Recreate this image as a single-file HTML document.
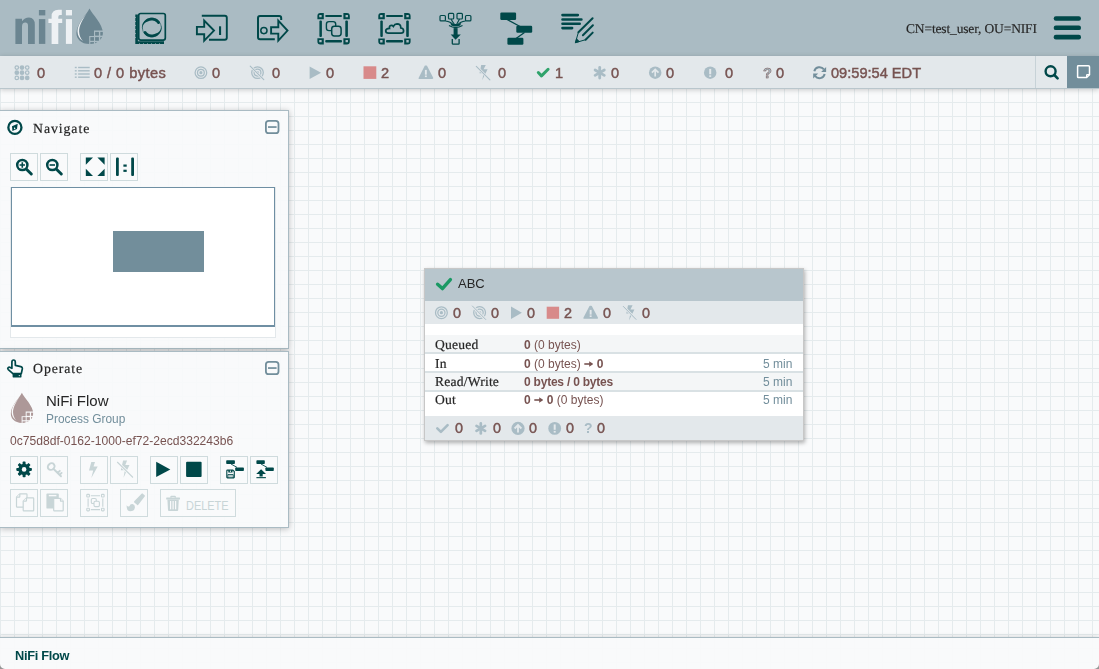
<!DOCTYPE html>
<html><head><meta charset="utf-8">
<style>
*{margin:0;padding:0;box-sizing:border-box}
html,body{width:1099px;height:669px;overflow:hidden}
body{position:relative;font-family:"Liberation Sans",sans-serif;background-color:#f9fafb;
background-image:linear-gradient(to right,#e5ebed 1px,transparent 1px),linear-gradient(to bottom,#e5ebed 1px,transparent 1px);
background-size:14px 14px;background-position:0 4px}
.abs{position:absolute}
#header{position:absolute;left:0;top:0;width:1099px;height:56px;background:#aabbc3}
#status{position:absolute;left:0;top:56px;width:1099px;height:33px;background:#e3e8eb;border-bottom:1px solid #b9c6cc;box-shadow:0 1px 5px rgba(0,0,0,0.2)}
.sv{position:absolute;top:1px;height:32px;line-height:32px;font-size:14.6px;color:#775351;white-space:nowrap;-webkit-text-stroke:0.45px #775351;will-change:transform}
.user{position:absolute;left:906px;top:21.4px;line-height:16px;font-family:"Liberation Serif",serif;font-size:13.5px;letter-spacing:-0.15px;will-change:transform;text-rendering:geometricPrecision;-webkit-text-stroke:0.15px #262626;color:#262626;white-space:nowrap}
.panel{position:absolute;left:0;width:289px;background:rgba(249,250,251,0.93);border:1px solid #aabbc3;border-left:none;box-shadow:0 1px 6px rgba(0,0,0,0.25)}
.ptitle{position:absolute;left:33px;font-family:"Liberation Serif",serif;font-size:13.8px;letter-spacing:0.93px;color:#262626;white-space:nowrap;will-change:transform;text-rendering:geometricPrecision;-webkit-text-stroke:0.2px #262626}
.btn{position:absolute;width:28px;height:28px;border:1px solid #cfdbdd;background:rgba(249,250,251,0.6)}
#pg{position:absolute;left:424px;top:268px;width:380px;height:173px;border:1px solid rgba(0,0,0,0.22);box-shadow:0.5px 1.5px 4px rgba(0,0,0,0.3);background:#fff;overflow:hidden}
.row{position:absolute;left:0;width:378px}
.lbl{position:absolute;left:434.8px;line-height:14px;font-family:"Liberation Serif",serif;font-size:13.6px;letter-spacing:0.2px;color:#262626;white-space:nowrap;will-change:transform;text-rendering:geometricPrecision;-webkit-text-stroke:0.2px #262626}
.arr{display:inline-block;vertical-align:1px}
.pv{position:absolute;font-size:14.4px;line-height:16px;color:#775351;white-space:nowrap;-webkit-text-stroke:0.45px #775351;will-change:transform}
.val{position:absolute;left:523.5px;line-height:14px;font-size:12px;color:#775351;white-space:nowrap;will-change:transform}
.info{position:absolute;left:762.5px;line-height:14px;font-size:12px;color:#728e9b;white-space:nowrap;will-change:transform}
#bc{position:absolute;left:0;top:637px;width:1099px;height:32px;background:rgba(249,250,251,0.95);border-top:1px solid #aabbc3;box-shadow:0 -1px 4px rgba(0,0,0,0.12)}
</style></head><body>

<div id="header">
<svg class="abs" style="left:0;top:0" width="1099" height="56" viewBox="0 0 1099 56">
<!-- logo -->
<g fill="#6b8591">
 <path d="M15.4,43.9 V18.8 H22 V21.2 Q24.5,17.4 29,17.4 Q34.8,17.6 34.8,24.5 V43.9 H28 V25.8 Q28,22.6 25.3,22.6 Q22,22.6 22,26.5 V43.9 Z"/>
 <rect x="38.9" y="10" width="6.4" height="5.4"/>
 <rect x="38.9" y="19.1" width="6.4" height="24.8"/>
</g>
<g fill="#eef1f4">
 <path d="M51.6,43.9 V23 H48.4 V18.8 H51.6 V16.5 Q51.6,9.8 58.5,9.8 H61.8 V15.1 H60 Q58.3,15.1 58.3,17 V18.8 H62.2 V23 H58.3 V43.9 Z"/>
 <rect x="65.9" y="10" width="6.1" height="5.4"/>
 <rect x="65.9" y="19.1" width="6.1" height="24.8"/>
</g>
<defs>
 <clipPath id="dclip"><path d="M89.5,8.4 C92,14 103,24 102.9,33 C102.8,39 98,44 89.5,44 C81,44 76.4,39 76.4,33 C76.4,24 87,14 89.5,8.4 Z"/></clipPath>
</defs>
<g fill="#6b8591">
  <g clip-path="url(#dclip)">
   <path d="M70,0 H110 V30.6 H94 V36 H89.2 V50 H70 Z"/>
   <rect x="95.1" y="31.9" width="3.8" height="3.7"/>
   <rect x="100.3" y="31.9" width="4" height="3.7"/>
   <rect x="90.3" y="37.1" width="3.7" height="3.7"/>
   <rect x="95.1" y="37.1" width="3.8" height="3.7"/>
   <rect x="100.3" y="37.1" width="4" height="3.7"/>
   <rect x="90.3" y="42.1" width="3.7" height="3.7"/>
   <rect x="95.1" y="42.1" width="3.8" height="3.7"/>
  </g>
 </g>
<path fill="#eef1f4" d="M86.6,13.8 C82,19.5 77.4,25.5 77.5,31.5 C77.6,35.8 79.5,39 82.9,41 C80.6,38.5 79.2,35.5 79.1,31.5 C79,26 82.5,19.5 86.6,13.8 Z"/>
<g fill="none" stroke="#004849">
 <!-- processor -->
 <rect x="138.7" y="13.5" width="26.6" height="26.6" rx="2" stroke-width="1.7"/>
 <path d="M136.6,14.6 V42.6 H164" stroke-width="2.6"/>
 <circle cx="151.8" cy="27.5" r="9.5" stroke-width="0.5"/>
 <!-- input port -->
 <path d="M201.8,15.7 H224.8 Q226.8,15.7 226.8,17.7 V37.8 Q226.8,39.8 224.8,39.8 H209" stroke-width="1.9"/>
 <path d="M196.9,26.9 H204.2 V20.6 L214,30.6 L204.2,40.6 V34.2 H196.9 Z" stroke-width="1.9" stroke-linejoin="miter"/>
 <!-- output port -->
 <path d="M281.2,19.9 V18.2 Q281.2,16.1 279.2,16.1 H260 Q258,16.1 258,18.1 V37.3 Q258,39.3 260,39.3 H274.8" stroke-width="2"/>
 <circle cx="263.9" cy="30.6" r="3.1" stroke-width="1.5"/>
 <path d="M271.1,27.3 H278.3 V20.6 L287.5,30.6 L278.3,40.6 V33.6 H271.1 Z" stroke-width="1.9"/>
 <!-- process group inner -->
 <rect x="326.4" y="21.6" width="9.3" height="9" rx="2.6" stroke-width="1.4"/>
 <rect x="331.7" y="26.3" width="9.4" height="9.6" rx="2.6" stroke-width="1.5" fill="#aabbc3"/>
 <!-- rpg cloud -->
 <path d="M388.5,33.2 H401 Q403.6,33.2 403.6,30.8 Q403.6,28.3 400.8,28 Q400.9,24 397,23.9 Q394.6,23.9 393.4,26.4 Q392.3,24.9 390.6,25.5 Q389,26.1 389.5,28.4 Q385.7,28.6 385.7,30.8 Q385.7,33.2 388.5,33.2 Z" stroke-width="1.7"/>
 <!-- funnel -->
 <rect x="440" y="15.5" width="5.4" height="5.4" rx="1" stroke-width="1.2"/>
 <rect x="448.5" y="13.3" width="5.2" height="5.7" rx="1" stroke-width="1.2"/>
 <rect x="457" y="13.3" width="5.4" height="5.7" rx="1" stroke-width="1.2"/>
 <rect x="465.5" y="15.5" width="5.4" height="5.4" rx="1" stroke-width="1.2"/>
 <path d="M445.4,21 Q451,22 452.5,24 M451,19 Q452.5,22 454.2,24 M459.5,19 Q458,22 456.8,24 M465.5,21 Q460,22 458.5,24" stroke-width="1.15"/>
 <path d="M449,25.6 Q455.5,29.5 462.5,25.6" stroke-width="1.2"/>
 <path d="M452.3,38.9 V43.4 Q452.3,44.2 453.1,44.2 H458.4 Q459.1,44.2 459.1,43.4 V38.9" stroke-width="1.3"/>
 <!-- label -->
 <path d="M562.5,15.1 H577.8 M562.5,19.5 H581.4 M562.5,23.7 H579.7 M562.5,28.1 H572.1" stroke-width="2.6" stroke-linecap="round"/>
 <path d="M578.4,32.3 L592.6,18.3 M582.9,35.2 L592.9,25.2 M585.6,39.7 L592.7,32.6" stroke-width="2" stroke-linecap="round"/>
 <path d="M578.4,32.3 L575.4,42.7 L585.6,39.7" stroke-width="1"/>
</g>
<g fill="#004849">
 <!-- pg frame -->
 <path d="M317.4,16 Q317.4,13.1 320.3,13.1 H323.8 V19.2 H317.4 Z M319.25,14.95 V17.35 H321.65 V14.95 Z" fill-rule="evenodd"/>
 <path d="M349.8,16 Q349.8,13.1 346.9,13.1 H343.4 V19.2 H349.8 Z M345.55,14.95 V17.35 H347.95 V14.95 Z" fill-rule="evenodd"/>
 <path d="M317.4,41.5 Q317.4,44.4 320.3,44.4 H323.8 V38.3 H317.4 Z M319.25,39.95 V42.35 H321.65 V39.95 Z" fill-rule="evenodd"/>
 <path d="M349.8,41.5 Q349.8,44.4 346.9,44.4 H343.4 V38.3 H349.8 Z M345.55,39.95 V42.35 H347.95 V39.95 Z" fill-rule="evenodd"/>
 <rect x="325.2" y="15" width="16.8" height="2.1" rx="1"/>
 <rect x="325.2" y="40.1" width="16.8" height="2.3" rx="1"/>
 <rect x="319.4" y="20.4" width="2.5" height="16.5" rx="1"/>
 <rect x="345.3" y="20.4" width="2.6" height="16.5" rx="1"/>
 <!-- rpg frame -->
 <path d="M378.3,16 Q378.3,13.1 381.2,13.1 H384.8 V19.2 H378.3 Z M380.15,14.95 V17.35 H382.55 V14.95 Z" fill-rule="evenodd"/>
 <path d="M410.6,16 Q410.6,13.1 407.7,13.1 H404.2 V19.2 H410.6 Z M406.35,14.95 V17.35 H408.75 V14.95 Z" fill-rule="evenodd"/>
 <path d="M378.3,41.6 Q378.3,44.5 381.2,44.5 H384.8 V38.4 H378.3 Z M380.15,40.05 V42.45 H382.55 V40.05 Z" fill-rule="evenodd"/>
 <path d="M410.6,41.6 Q410.6,44.5 407.7,44.5 H404.2 V38.4 H410.6 Z M406.35,40.05 V42.45 H408.75 V40.05 Z" fill-rule="evenodd"/>
 <rect x="386" y="15" width="17" height="2.1" rx="1"/>
 <rect x="386" y="40.1" width="17" height="2.3" rx="1"/>
 <rect x="380.3" y="20.4" width="2.5" height="16.6" rx="1"/>
 <rect x="406.2" y="20.4" width="2.6" height="16.6" rx="1"/>
 <!-- funnel -->
 <path d="M450.3,23 Q455.5,25.2 461.2,23 L460.2,25.6 Q455.5,27.6 451.3,25.6 Z"/>
 <rect x="453.6" y="28.1" width="4" height="7"/>
 <path d="M450.7,34.4 H460.8 L455.6,39.8 Z"/>
 <!-- input bar -->
 <rect x="219" y="26.3" width="2.1" height="8.7"/>
 <!-- template -->
 <rect x="500.3" y="12.6" width="15.8" height="7.3" rx="1.2"/>
 <rect x="516.3" y="25.7" width="15.9" height="7.1" rx="1.2"/>
 <rect x="507.4" y="37.7" width="16" height="7.1" rx="1.2"/>
 <!-- label tip -->
 <path d="M574.8,43.3 L576.3,38 L580.1,41.8 Z"/>
 <!-- hamburger -->
 <rect x="1053.7" y="16.3" width="27.3" height="4.5" rx="2.2"/>
 <rect x="1053.7" y="25.6" width="27.3" height="4.5" rx="2.2"/>
 <rect x="1053.7" y="34.8" width="27.3" height="4.6" rx="2.2"/>
</g>
<path d="M142.15,29.20 L142.04,28.33 L142.00,27.45 L142.04,26.58 L142.17,25.71 L142.36,24.85 L142.64,24.02 L142.99,23.21 L143.41,22.44 L143.89,21.71 L144.44,21.03 L145.05,20.40 L145.71,19.82 L146.42,19.31 L147.18,18.86 L147.97,18.48 L148.79,18.17 L149.64,17.94 L150.50,17.79 L151.38,17.71 L152.26,17.71 L153.13,17.79 L153.99,17.95 L154.84,18.18 L155.66,18.49 L156.45,18.87 L157.20,19.32 L157.91,19.84 L158.57,20.42 L159.18,21.05 L159.73,21.74 A1.40,1.40 0 0 1 157.46,23.39 L157.46,23.39 L157.07,22.90 L156.64,22.44 L156.17,22.03 L155.66,21.66 L155.12,21.34 L154.56,21.07 L153.97,20.85 L153.37,20.68 L152.75,20.56 L152.13,20.51 L151.50,20.51 L150.87,20.56 L150.26,20.67 L149.65,20.83 L149.04,21.00 L148.43,21.19 L147.80,21.40 L147.17,21.66 L146.53,21.96 L145.90,22.31 L145.28,22.73 L144.68,23.21 L144.13,23.77 L143.62,24.39 L143.18,25.08 L142.82,25.83 L142.56,26.63 L142.40,27.46 L142.36,28.30 L142.44,29.15 Z" fill="#004849"/><path d="M161.45,25.80 L161.56,26.67 L161.60,27.55 L161.56,28.42 L161.43,29.29 L161.24,30.15 L160.96,30.98 L160.61,31.79 L160.19,32.56 L159.71,33.29 L159.16,33.97 L158.55,34.60 L157.89,35.18 L157.18,35.69 L156.42,36.14 L155.63,36.52 L154.81,36.83 L153.96,37.06 L153.10,37.21 L152.22,37.29 L151.34,37.29 L150.47,37.21 L149.61,37.05 L148.76,36.82 L147.94,36.51 L147.15,36.13 L146.40,35.68 L145.69,35.16 L145.03,34.58 L144.42,33.95 L143.87,33.26 A1.40,1.40 0 0 1 146.14,31.61 L146.14,31.61 L146.53,32.10 L146.96,32.56 L147.43,32.97 L147.94,33.34 L148.48,33.66 L149.04,33.93 L149.63,34.15 L150.23,34.32 L150.85,34.44 L151.47,34.49 L152.10,34.49 L152.73,34.44 L153.34,34.33 L153.95,34.17 L154.56,34.00 L155.17,33.81 L155.80,33.60 L156.43,33.34 L157.07,33.04 L157.70,32.69 L158.32,32.27 L158.92,31.79 L159.47,31.23 L159.98,30.61 L160.42,29.92 L160.78,29.17 L161.04,28.37 L161.20,27.54 L161.24,26.70 L161.16,25.85 Z" fill="#004849"/>
<g fill="#aabbc3"><rect x="135" y="17" width="0.9" height="0.8"/><rect x="135" y="21" width="0.9" height="0.8"/><rect x="135" y="25" width="0.9" height="0.8"/><rect x="135" y="29" width="0.9" height="0.8"/><rect x="135" y="33" width="0.9" height="0.8"/><rect x="135" y="37" width="0.9" height="0.8"/><rect x="139" y="43.3" width="0.8" height="0.9"/><rect x="143" y="43.3" width="0.8" height="0.9"/><rect x="147" y="43.3" width="0.8" height="0.9"/><rect x="151" y="43.3" width="0.8" height="0.9"/><rect x="155" y="43.3" width="0.8" height="0.9"/><rect x="159" y="43.3" width="0.8" height="0.9"/></g>
<path d="M507,19.5 L521,27 M524.5,32.5 L516,38.5" stroke="#004849" stroke-width="1.3" fill="none"/>
</svg>
<div class="user">CN=test_user, OU=NIFI</div>
</div>

<div id="status">
<svg class="abs" style="left:0;top:-56px" width="1099" height="88" viewBox="0 0 1099 88">
<g fill="#a9bcc5" stroke="none">
 <circle cx="22" cy="67.6" r="2.35"/><circle cx="16.8" cy="72.7" r="2.35"/><circle cx="22" cy="72.7" r="2.35"/><circle cx="22" cy="77.9" r="2.35"/><circle cx="27.2" cy="77.9" r="2.35"/>
</g>
<g fill="none" stroke="#a9bcc5" stroke-width="1.25">
 <circle cx="16.8" cy="67.6" r="1.75"/><circle cx="27.2" cy="67.6" r="1.75"/><circle cx="27.2" cy="72.7" r="1.75"/><circle cx="16.8" cy="77.9" r="1.75"/>
</g>
<g fill="#a9bcc5">
 <rect x="74.8" y="66.8" width="1.9" height="1.4"/><rect x="74.8" y="70.1" width="1.9" height="1.4"/><rect x="74.8" y="73.3" width="1.9" height="1.4"/><rect x="74.8" y="76.5" width="1.9" height="1.4"/>
 <rect x="78.1" y="66.8" width="11.6" height="1.4"/><rect x="78.1" y="70.1" width="11.6" height="1.4"/><rect x="78.1" y="73.3" width="11.6" height="1.4"/><rect x="78.1" y="76.5" width="11.6" height="1.4"/>
</g>
<g fill="none" stroke="#a9bcc5" stroke-width="1.25">
 <circle cx="200.9" cy="72.7" r="5.8"/><circle cx="200.9" cy="72.7" r="3.4"/>
 <circle cx="257.5" cy="72.6" r="5.8"/><circle cx="257.5" cy="72.6" r="3.4"/>
</g>
<circle cx="200.9" cy="72.7" r="1.6" fill="#a9bcc5"/>
<circle cx="257.5" cy="72.6" r="1.6" fill="#a9bcc5"/>
<path d="M250.2,66.1 L263.8,79.6" stroke="#e3e8eb" stroke-width="2.6"/><path d="M250.2,66.1 L263.8,79.6" stroke="#a9bcc5" stroke-width="1.1" stroke-linecap="round"/>
<path d="M309.6,66.6 L321.1,72.7 L309.6,78.9 Z" fill="#a9bcc5"/>
<rect x="363.5" y="66.3" width="12.8" height="12.6" fill="#d88a8a"/>
<path d="M425.8,65.5 Q426.5,65.2 427,65.8 L433.2,77.8 Q433.5,78.9 432.4,78.9 H419.2 Q418.2,78.9 418.6,77.9 L424.7,65.8 Q425.1,65.2 425.8,65.5 Z" fill="#a9bcc5"/>
<rect x="424.9" y="69.9" width="1.9" height="4.8" fill="#e3e8eb"/><rect x="424.9" y="75.5" width="1.9" height="1.6" fill="#e3e8eb"/>
<path d="M481.2,65 H485.8 L483.6,69.3 H487.6 L482.2,80.2 L483.6,73.2 H479.5 Z" fill="#a9bcc5"/>
<path d="M476.3,66.3 L489.9,79.8" stroke="#e3e8eb" stroke-width="2.6"/><path d="M476.3,66.3 L489.9,79.8" stroke="#a9bcc5" stroke-width="1.1" stroke-linecap="round"/>
<path d="M538.3,72.5 L541.5,75.9 L548.1,69.3" fill="none" stroke="#2fa36b" stroke-width="3" stroke-linecap="round" stroke-linejoin="round"/>
<g stroke="#a9bcc5" stroke-width="2.8" stroke-linecap="round">
 <path d="M599.7,67.4 V78"/><path d="M595.1,70 L604.3,75.4"/><path d="M595.1,75.4 L604.3,70"/>
</g>
<circle cx="655.2" cy="72.7" r="6.25" fill="#a9bcc5"/>
<path d="M655.2,76.6 V69.6 M651.9,72.7 L655.2,69.4 L658.5,72.7" fill="none" stroke="#e3e8eb" stroke-width="1.7"/>
<circle cx="710.2" cy="72.7" r="6.25" fill="#a9bcc5"/>
<rect x="709.2" y="68.9" width="2" height="5.4" fill="#e3e8eb"/><rect x="709.2" y="75.3" width="2" height="1.6" fill="#e3e8eb"/>
<g fill="none" stroke="#728e9b" stroke-width="2">
 <path d="M814.3,71.3 A5.4,5.4 0 0 1 823.9,69.4"/>
 <path d="M824.7,74.1 A5.4,5.4 0 0 1 815.1,76"/>
</g>
<path d="M826.1,66.9 V71.9 H821.1 Z" fill="#728e9b"/>
<path d="M813.2,78.6 V73.6 H818.2 Z" fill="#728e9b"/>
<circle cx="1050.6" cy="71.3" r="5" fill="none" stroke="#004849" stroke-width="2.4"/>
<path d="M1054.3,75 L1057.6,78.3" stroke="#004849" stroke-width="2.6" stroke-linecap="round"/>
</svg>
<div class="sv" style="left:37.3px">0</div>
<div class="sv" style="left:94.3px;letter-spacing:0.45px">0 / 0 bytes</div>
<div class="sv" style="left:212.1px">0</div>
<div class="sv" style="left:272.3px">0</div>
<div class="sv" style="left:325.9px">0</div>
<div class="sv" style="left:380.8px">2</div>
<div class="sv" style="left:438.2px">0</div>
<div class="sv" style="left:498.4px">0</div>
<div class="sv" style="left:555.4px">1</div>
<div class="sv" style="left:611.1px">0</div>
<div class="sv" style="left:666px">0</div>
<div class="sv" style="left:725px">0</div>
<div class="sv" style="left:763px;color:#a9bcc5;font-weight:bold">?</div>
<div class="sv" style="left:775.8px">0</div>
<div class="sv" style="left:830.7px">09:59:54 EDT</div>
<div class="abs" style="left:1035px;top:0;width:1px;height:32px;background:#c7d2d7"></div>
<div class="abs" style="left:1067px;top:0;width:32px;height:32px;background:#728e9b"></div>
<svg class="abs" style="left:1067px;top:0" width="32" height="32" viewBox="1067 56 32 32">
 <path d="M1078.3,65.7 H1088.4 Q1089.5,65.7 1089.5,66.8 V74.6 L1086.6,77.6 H1078.3 Q1077.6,77.6 1077.6,76.9 V66.4 Q1077.6,65.7 1078.3,65.7 Z" fill="none" stroke="#fff" stroke-width="1.5"/>
 <path d="M1089.5,74.6 H1087.3 Q1086.6,74.6 1086.6,75.3 V77.6" fill="none" stroke="#fff" stroke-width="1.2"/>
</svg>
</div>

<div class="panel" style="top:110px;height:239px"></div>
<div class="ptitle" style="top:120.6px">Navigate</div>
<div class="btn" style="left:10px;top:153px"></div>
<div class="btn" style="left:40px;top:153px"></div>
<div class="btn" style="left:80px;top:153px"></div>
<div class="btn" style="left:110px;top:153px"></div>
<div class="abs" style="left:10px;top:187px;width:266px;height:151px;background:#fff;border:1px solid #e3e8eb"></div>
<div class="abs" style="left:11px;top:187px;width:264px;height:140px;border:1px solid #6f8fa3;border-bottom-width:2px;border-left-width:1.5px"></div>
<div class="abs" style="left:113px;top:231px;width:91px;height:41px;background:#728e9b"></div>
<div class="panel" style="top:351px;height:177px"></div>
<div class="ptitle" style="top:361.4px">Operate</div>
<svg class="abs" style="left:0;top:385px" width="40" height="45" viewBox="0 385 40 45">
 <g transform="translate(-54.2,385.56) scale(0.85)">
  <g fill="#ad9898">
  <g clip-path="url(#dclip)">
   <path d="M70,0 H110 V30.6 H94 V36 H89.2 V50 H70 Z"/>
   <rect x="95.1" y="31.9" width="3.8" height="3.7"/>
   <rect x="100.3" y="31.9" width="4" height="3.7"/>
   <rect x="90.3" y="37.1" width="3.7" height="3.7"/>
   <rect x="95.1" y="37.1" width="3.8" height="3.7"/>
   <rect x="100.3" y="37.1" width="4" height="3.7"/>
   <rect x="90.3" y="42.1" width="3.7" height="3.7"/>
   <rect x="95.1" y="42.1" width="3.8" height="3.7"/>
  </g>
 </g>
  <path fill="#f9fafb" d="M86.6,13.8 C82,19.5 77.4,25.5 77.5,31.5 C77.6,35.8 79.5,39 82.9,41 C80.6,38.5 79.2,35.5 79.1,31.5 C79,26 82.5,19.5 86.6,13.8 Z"/>
 </g>
</svg>
<div class="abs" style="left:46.3px;top:392.3px;font-size:15px;line-height:18px;color:#262626;white-space:nowrap;will-change:transform">NiFi Flow</div>
<div class="abs" style="left:46.3px;top:412px;font-size:11.9px;line-height:14px;color:#728e9b;white-space:nowrap;will-change:transform">Process Group</div>
<div class="abs" style="left:10.3px;top:433.5px;font-size:12.1px;line-height:14px;color:#775351;white-space:nowrap;will-change:transform">0c75d8df-0162-1000-ef72-2ecd332243b6</div>
<div class="btn" style="left:10px;top:456px"></div>
<div class="btn" style="left:40px;top:456px"></div>
<div class="btn" style="left:80px;top:456px"></div>
<div class="btn" style="left:110px;top:456px"></div>
<div class="btn" style="left:150px;top:456px"></div>
<div class="btn" style="left:180px;top:456px"></div>
<div class="btn" style="left:220px;top:456px"></div>
<div class="btn" style="left:250px;top:456px"></div>
<div class="btn" style="left:10px;top:489px"></div>
<div class="btn" style="left:40px;top:489px"></div>
<div class="btn" style="left:80px;top:489px"></div>
<div class="btn" style="left:120px;top:489px"></div>
<div class="btn" style="left:160px;top:489px;width:76px"></div>
<div class="abs" style="left:186px;top:499px;font-size:12.7px;line-height:14px;color:#c8d5d7;white-space:nowrap;transform:scaleX(0.86);transform-origin:0 0">DELETE</div>
<svg class="abs" style="left:0;top:0" width="300" height="530" viewBox="0 0 300 530">
 <circle cx="14.9" cy="127.4" r="6.55" fill="none" stroke="#004849" stroke-width="2.3"/>
 <path d="M17.7,123.7 L17,129 L12.4,131.1 L12,126.3 Z" fill="#004849"/>
 <path d="M14,127.2 L15.6,128.3 L14,129.4 Z" fill="#fff"/>
 <rect x="265.9" y="120.8" width="12.6" height="12.4" rx="2.8" fill="none" stroke="#728e9b" stroke-width="1.8"/>
 <rect x="268" y="126.2" width="8.6" height="1.7" fill="#728e9b"/>
 <rect x="265.9" y="361.8" width="12.6" height="12.4" rx="2.8" fill="none" stroke="#728e9b" stroke-width="1.8"/>
 <rect x="268" y="367.2" width="8.6" height="1.7" fill="#728e9b"/>
 <!-- zoom in/out -->
 <g fill="none" stroke="#004849">
  <circle cx="22.3" cy="165" r="5.1" stroke-width="2.5"/>
  <path d="M26.2,169 L31.3,174" stroke-width="3" stroke-linecap="round"/>
  <path d="M19.6,165 H25 M22.3,162.3 V167.7" stroke-width="1.6"/>
  <circle cx="52.3" cy="165" r="5.1" stroke-width="2.5"/>
  <path d="M56.2,169 L61.3,174" stroke-width="3" stroke-linecap="round"/>
  <path d="M49.6,165 H55" stroke-width="1.6"/>
 </g>
 <g fill="#004849">
  <path d="M85.8,157.6 H93 L85.8,164.8 Z"/><path d="M104.6,157.6 H97.4 L104.6,164.8 Z"/>
  <path d="M85.8,175.9 H93 L85.8,168.7 Z"/><path d="M104.6,175.9 H97.4 L104.6,168.7 Z"/>
  <rect x="116" y="157.6" width="2.8" height="18.3" rx="1"/>
  <rect x="131.2" y="157.6" width="2.8" height="18.3" rx="1"/>
  <rect x="123.4" y="164.5" width="3.3" height="2.2"/>
  <rect x="123.4" y="169.7" width="3.3" height="2.2"/>
 </g>
 <!-- hand -->
 <path d="M11.9,368.3 V362.2 Q11.9,360 13.6,360 Q15.3,360 15.3,362.2 V365.3 L20.8,366.6 Q22.6,367.1 22.3,369 L21.3,373.6 H12.9 L8.3,369.6 Q7.3,368.6 8.2,367.6 Q9.1,366.8 10.3,367.4 Z" fill="none" stroke="#004849" stroke-width="1.7" stroke-linejoin="round"/>
 <rect x="12.6" y="373.8" width="8.9" height="3.6" rx="0.6" fill="#004849"/>
 <circle cx="19.3" cy="375.6" r="0.6" fill="#fff"/>
 <!-- gear -->
 <g transform="translate(24.1,469.4)" fill="#004849">
  <circle r="5.7"/><rect x="-1.5" y="-7.8" width="3" height="4" rx="0.8" transform="rotate(0)"/><rect x="-1.5" y="-7.8" width="3" height="4" rx="0.8" transform="rotate(45)"/><rect x="-1.5" y="-7.8" width="3" height="4" rx="0.8" transform="rotate(90)"/><rect x="-1.5" y="-7.8" width="3" height="4" rx="0.8" transform="rotate(135)"/><rect x="-1.5" y="-7.8" width="3" height="4" rx="0.8" transform="rotate(180)"/><rect x="-1.5" y="-7.8" width="3" height="4" rx="0.8" transform="rotate(225)"/><rect x="-1.5" y="-7.8" width="3" height="4" rx="0.8" transform="rotate(270)"/><rect x="-1.5" y="-7.8" width="3" height="4" rx="0.8" transform="rotate(315)"/>
  <circle r="2.3" fill="#f9fafb"/>
 </g>
 <!-- key -->
 <g fill="none" stroke="#c8d5d7" stroke-width="1.9" stroke-linecap="round">
  <ellipse cx="51.2" cy="466.6" rx="3.6" ry="3.1" transform="rotate(-40 51.2 466.6)"/>
  <path d="M53.9,469.3 L61,476.3 M57.6,473 L59.8,470.8 M59.6,474.9 L61.6,472.9"/>
 </g>
 <path d="M91.3,462 H95 L93.5,466.5 H97.7 L91.3,478.1 L93.2,470.5 H89 Z" fill="#c8d5d7"/>
 <path d="M123.1,460.4 H127.1 L125.3,464.9 H129.5 L123.5,477.8 L124.8,470.2 H120.8 Z" fill="#c8d5d7"/>
 <path d="M117.2,462 L133,477.5" stroke="#f9fafb" stroke-width="2.6"/>
 <path d="M117.2,462 L133,477.5" stroke="#c8d5d7" stroke-width="1.1"/>
 <path d="M156.2,461.7 L170.3,469.4 L156.2,477 Z" fill="#004849"/>
 <rect x="186.1" y="461.7" width="15.5" height="15.3" rx="1" fill="#004849"/>
 <!-- template create -->
 <rect x="226.2" y="460.3" width="8.7" height="3.7" rx="0.8" fill="#004849"/>
 <rect x="235.2" y="467.4" width="8.7" height="3.6" rx="0.8" fill="#004849"/>
 <path d="M231,464 L237,467.4" stroke="#004849" stroke-width="0.9"/>
 <path d="M226.8,470.7 Q226.8,470.1 227.4,470.1 H232.8 L234.3,471.6 V477.3 Q234.3,477.9 233.7,477.9 H227.4 Q226.8,477.9 226.8,477.3 Z" fill="none" stroke="#004849" stroke-width="1.1"/>
 <rect x="228.3" y="470.1" width="4.2" height="2.4" fill="#004849"/>
 <rect x="229.9" y="470.6" width="1" height="1.3" fill="#f9fafb"/>
 <path d="M227.9,477.9 V474.6 H233.2 V477.9" fill="none" stroke="#004849" stroke-width="0.9"/>
 <path d="M228.8,476 H232.3" stroke="#004849" stroke-width="0.5"/>
 <rect x="256.4" y="460.3" width="8.4" height="3.7" rx="0.8" fill="#004849"/>
 <rect x="265.4" y="467.4" width="8.4" height="3.6" rx="0.8" fill="#004849"/>
 <path d="M261,464 L267,467.4" stroke="#004849" stroke-width="0.9"/>
 <path d="M256.2,474 L261.1,469.2 L266,474 H262.7 V476.6 H259.5 V474 Z" fill="#004849"/>
 <rect x="256.4" y="477.1" width="9.5" height="1.1" fill="#004849"/>
 <!-- copy -->
 <g fill="#f9fafb" stroke="#c8d5d7" stroke-width="1.2" stroke-linejoin="round">
  <path d="M19.8,493.9 H26.4 Q27,493.9 27,494.5 V506.6 Q27,507.2 26.4,507.2 H17.1 Q16.5,507.2 16.5,506.6 V497.2 Z"/>
  <path d="M16.5,497.2 H19.2 Q19.8,497.2 19.8,496.6 V493.9"/>
  <path d="M26.5,497.9 H33.1 Q33.7,497.9 33.7,498.5 V510.2 Q33.7,510.8 33.1,510.8 H23.8 Q23.2,510.8 23.2,510.2 V501.2 Z"/>
  <path d="M23.2,501.2 H25.9 Q26.5,501.2 26.5,500.6 V497.9"/>
 </g>
 <!-- paste -->
 <rect x="46.4" y="493.6" width="12.4" height="15" rx="0.9" fill="#c8d5d7"/>
 <rect x="48.8" y="494.9" width="7.6" height="1.4" fill="#f9fafb"/>
 <g fill="#f9fafb" stroke="#c8d5d7" stroke-width="1.2" stroke-linejoin="round">
  <path d="M53.7,498.4 H60.5 L63.2,501.1 V510.2 Q63.2,510.8 62.6,510.8 H54.3 Q53.7,510.8 53.7,510.2 Z"/>
  <path d="M60.5,498.4 V501.1 H63.2"/>
 </g>
 <!-- group -->
 <g fill="none" stroke="#c8d5d7" stroke-width="1.1">
  <rect x="86.8" y="494.4" width="2.6" height="2.6" rx="0.6"/><rect x="101.5" y="494.4" width="2.6" height="2.6" rx="0.6"/>
  <rect x="86.8" y="508.3" width="2.6" height="2.6" rx="0.6"/><rect x="101.5" y="508.3" width="2.6" height="2.6" rx="0.6"/>
  <path d="M90.8,495.7 H100 M90.8,509.6 H100 M88.1,498.5 V506.8 M102.8,498.5 V506.8"/>
  <rect x="91.3" y="498.5" width="5" height="5" rx="1.3"/>
  <rect x="94" y="501.2" width="5.4" height="5.4" rx="1.3" fill="#f9fafb"/>
 </g>
 <!-- brush -->
 <path d="M142.2,494.3 L144,496 L137.6,504.2 L134.9,501.8 Z" fill="#c8d5d7" stroke="#c8d5d7" stroke-width="1.8" stroke-linejoin="round"/>
 <path d="M126.6,505.2 Q127.8,507.2 129.4,506.2 Q130.2,503.8 132.5,504.1 Q135.2,504.8 134.9,507.6 Q134.4,511.3 130.2,511.3 Q126.5,511.3 126.6,505.2 Z" fill="#c8d5d7"/>
 <!-- trash -->
 <g fill="#c8d5d7">
  <rect x="166.2" y="497.6" width="13.8" height="1.8" rx="0.5"/>
  <path d="M170.3,497.8 V496.7 Q170.3,495.7 171.3,495.7 H174.9 Q175.9,495.7 175.9,496.7 V497.8 H174.6 V497 H171.6 V497.8 Z"/>
  <path d="M167.4,499.4 H178.8 L178.2,510 Q178.2,511 177.2,511 H169 Q168,511 168,510 Z"/>
 </g>
 <g fill="#f9fafb"><rect x="170" y="501" width="1.2" height="8.3"/><rect x="172.5" y="501" width="1.2" height="8.3"/><rect x="175" y="501" width="1.2" height="8.3"/></g>
</svg>

<div id="pg">
  <div class="row" style="top:0;height:32px;background:#b8c6cd"></div>
  <div class="row" style="top:32px;height:23px;background:#e3e8eb"></div>
  <div class="row" style="top:66px;height:17px;background:#f4f6f7"></div>
  <div class="row" style="top:83px;height:2px;background:#d9e1e4"></div>
  <div class="row" style="top:102px;height:2px;background:#d9e1e4"></div>
  <div class="row" style="top:104px;height:17px;background:#f4f6f7"></div>
  <div class="row" style="top:121px;height:2px;background:#d9e1e4"></div>
  <div class="row" style="top:147px;height:24px;background:#e3e8eb"></div>
</div>
<div class="abs" style="left:458px;top:275.9px;font-size:13px;line-height:16px;color:#262626;will-change:transform">ABC</div>
<div class="pv" style="left:452.5px;top:304.5px">0</div>
<div class="pv" style="left:491.4px;top:304.5px">0</div>
<div class="pv" style="left:527.3px;top:304.5px">0</div>
<div class="pv" style="left:563.9px;top:304.5px">2</div>
<div class="pv" style="left:602.8px;top:304.5px">0</div>
<div class="pv" style="left:641.7px;top:304.5px">0</div>
<div class="lbl" style="top:337.6px">Queued</div>
<div class="lbl" style="top:356.6px">In</div>
<div class="lbl" style="top:374.6px">Read/Write</div>
<div class="lbl" style="top:392.6px">Out</div>
<div class="val" style="top:338px"><b>0</b> (0 bytes)</div>
<div class="val" style="top:357px"><b>0</b> (0 bytes) <svg class="arr" width="9.4" height="6" viewBox="0 0 9.4 6"><path d="M0.3,3 H6" stroke="#775351" stroke-width="1.6"/><path d="M5.2,0.3 L9.4,3 L5.2,5.7 Z" fill="#775351"/></svg> <b>0</b></div>
<div class="val" style="top:375px;letter-spacing:-0.22px"><b>0 bytes / 0 bytes</b></div>
<div class="val" style="top:393px"><b>0</b> <svg class="arr" width="9.4" height="6" viewBox="0 0 9.4 6"><path d="M0.3,3 H6" stroke="#775351" stroke-width="1.6"/><path d="M5.2,0.3 L9.4,3 L5.2,5.7 Z" fill="#775351"/></svg> <b>0</b> (0 bytes)</div>
<div class="info" style="top:357px">5 min</div>
<div class="info" style="top:375px">5 min</div>
<div class="info" style="top:393px">5 min</div>
<div class="pv" style="left:454.8px;top:420px">0</div>
<div class="pv" style="left:492.5px;top:420px">0</div>
<div class="pv" style="left:529.4px;top:420px">0</div>
<div class="pv" style="left:566.3px;top:420px">0</div>
<div class="pv" style="left:596.7px;top:420px">0</div>
<div class="abs" style="left:584px;top:420px;font-size:14px;line-height:16px;font-weight:bold;color:#a9bcc5;will-change:transform">?</div>
<svg class="abs" style="left:400px;top:260px" width="420" height="200" viewBox="400 260 420 200">
 <path d="M437.6,284.2 L442.4,288.6 L450.4,279.6" fill="none" stroke="#1a9964" stroke-width="3.4" stroke-linecap="round" stroke-linejoin="round"/>
 <g fill="none" stroke="#a9bcc5" stroke-width="1.25">
  <circle cx="441.4" cy="312.7" r="5.9"/><circle cx="441.4" cy="312.7" r="3.6"/>
  <circle cx="479.6" cy="312.6" r="5.9"/><circle cx="479.6" cy="312.6" r="3.6"/>
 </g>
 <circle cx="441.4" cy="312.7" r="1.6" fill="#a9bcc5"/><circle cx="479.6" cy="312.6" r="1.6" fill="#a9bcc5"/>
 <path d="M472.4,306 L485.7,319.5" stroke="#e3e8eb" stroke-width="2.6"/><path d="M472.4,306 L485.7,319.5" stroke="#a9bcc5" stroke-width="1.0" stroke-linecap="round"/>
 <path d="M511,306.4 L521.9,312.7 L511,319.1 Z" fill="#a9bcc5"/>
 <rect x="546.7" y="306.7" width="12.4" height="12.1" fill="#d88a8a"/>
 <path d="M590.6,305.8 Q591.3,305.5 591.8,306.1 L598,317.7 Q598.3,318.8 597.2,318.8 H584 Q583,318.8 583.4,317.8 L589.5,306.1 Q589.9,305.5 590.6,305.8 Z" fill="#a9bcc5"/>
 <rect x="589.7" y="309.9" width="1.9" height="4.7" fill="#e3e8eb"/><rect x="589.7" y="315.4" width="1.9" height="1.6" fill="#e3e8eb"/>
 <path d="M628,305.3 H632.6 L630.4,309.6 H634.4 L629,320.5 L630.4,313.5 H626.3 Z" fill="#a9bcc5"/>
 <path d="M623.3,306.4 L636,319.4" stroke="#e3e8eb" stroke-width="2.6"/><path d="M623.3,306.4 L636,319.4" stroke="#a9bcc5" stroke-width="1.0" stroke-linecap="round"/>
 <path d="M437.3,428.4 L440.9,431.9 L447.6,425.2" fill="none" stroke="#a9bcc5" stroke-width="2.6" stroke-linecap="round" stroke-linejoin="round"/>
 <g stroke="#a9bcc5" stroke-width="2.7" stroke-linecap="round">
  <path d="M480.8,423.4 V433.4"/><path d="M476.5,425.9 L485.1,430.9"/><path d="M476.5,430.9 L485.1,425.9"/>
 </g>
 <circle cx="518" cy="428.4" r="6.6" fill="#a9bcc5"/>
 <path d="M518,432.4 V425.2 M514.6,428.5 L518,425.1 L521.4,428.5" fill="none" stroke="#e3e8eb" stroke-width="1.8"/>
 <circle cx="554.7" cy="428.4" r="6.4" fill="#a9bcc5"/>
 <rect x="553.7" y="424.4" width="2" height="5.4" fill="#e3e8eb"/><rect x="553.7" y="430.9" width="2" height="1.7" fill="#e3e8eb"/>
</svg>

<div id="bc"></div>
<div class="abs" style="left:15.2px;top:648px;font-size:12.8px;letter-spacing:-0.3px;line-height:16px;font-weight:bold;color:#004849;white-space:nowrap;will-change:transform">NiFi Flow</div>

<svg class="abs" style="left:0;top:0;pointer-events:none" width="1099" height="669" viewBox="0 0 1099 669">
 <path d="M0,664 A5,5 0 0 0 5,669 H0 Z" fill="#959595"/>
 <path d="M1099,664 A5,5 0 0 1 1094,669 H1099 Z" fill="#959595"/>
</svg>
</body></html>
